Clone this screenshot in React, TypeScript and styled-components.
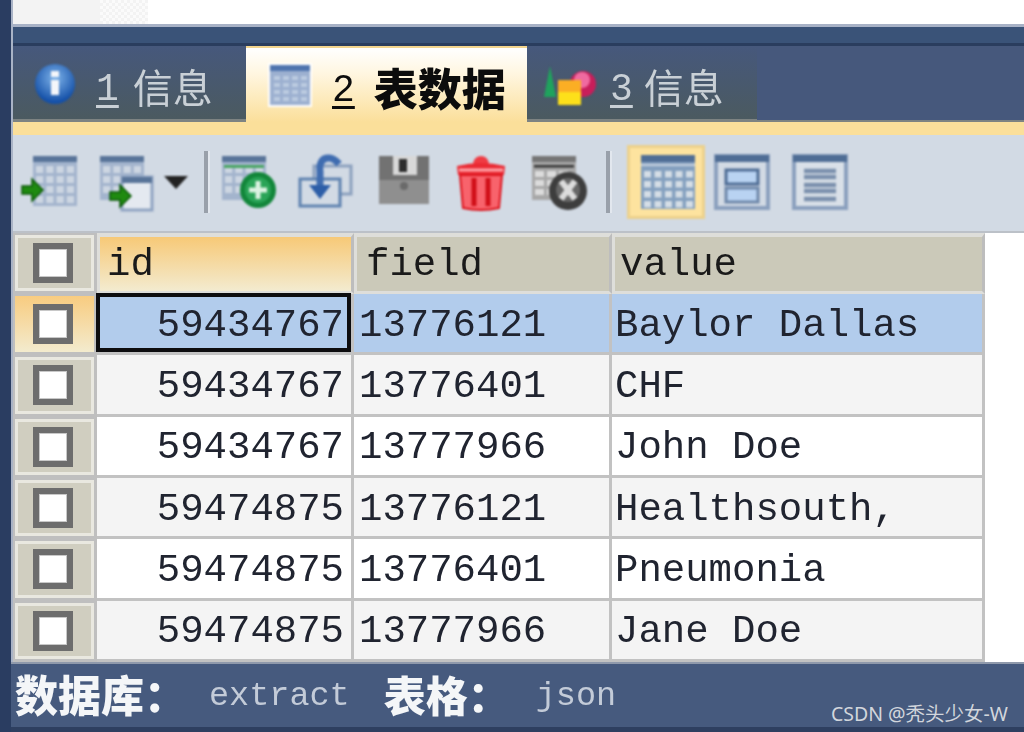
import React from "react";
import styled, { createGlobalStyle } from "styled-components";

const Global = createGlobalStyle`
  html, body { margin: 0; padding: 0; background: #fff; overflow: hidden; }
`;
const MONO = `"Liberation Mono", "Noto Sans CJK SC", monospace`;
const CJK = `"Liberation Mono", "Noto Sans CJK SC", sans-serif`;

const Page = styled.div`
  width: 1024px; height: 732px; display: flex; overflow: hidden; position: relative; background: #fff;
`;
const LeftBar = styled.div`
  width: 11px; flex: none; background: #2a3d61; border-right: 2px solid #a9b3c6;
`;
const Main = styled.div`
  flex: 1; min-width: 0; display: flex; flex-direction: column;
`;
const TopStrip = styled.div`
  height: 24px; flex: none; display: flex; background: #fff;
`;
const TopGrey = styled.div`
  width: 87px; background: #f3f3f3;
`;
const TopChecker = styled.div`
  width: 48px; background: repeating-conic-gradient(#f3f3f3 0 25%, #fbfbfb 0 50%) 0 0 / 6px 6px;
`;
const DarkBand = styled.div`
  height: 16px; flex: none; background: #3a5378; border-top: 3px solid #a8b2c6; border-bottom: 3px solid #2a3d5e;
`;
const TabStrip = styled.div`
  height: 76px; flex: none; display: flex; background: #46587c; box-shadow: inset 0 -2px 0 #7d8382;
`;
const Tab = styled.div<{ $w: number; $active?: boolean }>`
  width: ${p => p.$w}px; flex: none; display: flex; align-items: center; box-sizing: border-box;
  background: ${p => p.$active
    ? "linear-gradient(#ffffff 0%, #fff6e0 35%, #fbdf9a 100%)"
    : "linear-gradient(#46587c, #4b5a60 96%, #7d8382 96%)"};
  border-top: ${p => (p.$active ? "2px solid #f3d58e" : "0")};
  color: ${p => (p.$active ? "#0c0c0c" : "#c9d0d6")};
  font-family: ${CJK};
`;
const TabIcon = styled.svg<{ $ml: number }>`
  flex: none; margin-left: ${p => p.$ml}px; filter: blur(0.8px);
`;
const TabNum = styled.span<{ $ml: number }>`
  display: inline-block; filter: blur(0.6px);
  font: 400 38px ${MONO}; text-decoration: underline; text-underline-offset: 5px; text-decoration-thickness: 3px;
  margin-left: ${p => p.$ml}px; margin-top: 10px;
`;
const TabLabel = styled.span<{ $ml: number; $active?: boolean }>`
  display: inline-block; filter: blur(0.7px);
  font-family: ${CJK}; font-size: ${p => (p.$active ? 44 : 40)}px; font-weight: ${p => (p.$active ? 900 : 400)};
  margin-left: ${p => p.$ml}px; margin-top: 4px; white-space: nowrap;
`;
const YellowBand = styled.div`
  height: 13px; flex: none; background: #fbdf9a;
`;
const Toolbar = styled.div`
  height: 98px; flex: none; box-sizing: border-box; display: flex; align-items: center; background: #d2dae4;
  border-bottom: 2px solid #bcc1c8; padding-bottom: 2px;
`;
const ToolIcon = styled.svg<{ $ml: number }>`
  flex: none; margin-left: ${p => p.$ml}px; margin-top: -1px; filter: blur(1px);
`;
const Drop = styled.svg`
  flex: none; margin-left: 3px; filter: blur(0.8px);
`;
const Sep = styled.div<{ $ml: number }>`
  width: 4px; height: 62px; flex: none; margin-left: ${p => p.$ml}px; background: #99a0aa;
  box-shadow: 2px 0 0 #e2e7ee; filter: blur(0.6px);
`;
const ActiveBox = styled.div`
  width: 78px; height: 74px; flex: none; margin-left: 17px; display: flex; align-items: center; justify-content: center;
  box-sizing: border-box; padding-left: 3px; background: #fde39f; border: 3px solid #ecd18c; filter: blur(0.8px);
`;
const Grid = styled.div`
  width: 972px; height: 429px; flex: none; box-sizing: border-box; background: #bdbdbd;
  display: grid; grid-template-columns: 84px 257px 258px 373px; grid-template-rows: 61px repeat(6, 1fr);
  overflow: hidden;
`;
const Corner = styled.div<{ $current?: boolean }>`
  display: flex; align-items: center; justify-content: center; box-sizing: border-box; padding-right: 4px;
  border: solid #bfbfbf; border-width: 2px 3px 3px 2px;
  background: ${p => p.$current ? "linear-gradient(#f8cc80, #f3ebce)" : "#d0cec0"};
  box-shadow: inset 0 0 0 3px ${p => (p.$current ? "transparent" : "#e9e8e0")};
`;
const Check = styled.div`
  width: 40px; height: 40px; box-sizing: border-box; background: #fff; border: 6px solid #6d6d6d;
  box-shadow: inset 0 0 0 1px #c8c8c8; filter: blur(0.7px);
`;
const Head = styled.div<{ $active?: boolean; $pl: number }>`
  box-sizing: border-box; padding: 2px 0 0 ${p => p.$pl}px; display: flex; align-items: center;
  border: 3px solid #dededa; border-width: 4px 3px 3px 3px; border-right-color: #bdbdbd;
  font: 400 39px ${MONO}; color: #1a1a1a; white-space: pre;
  background: ${p => p.$active ? "linear-gradient(#f7c977, #f3ebd0)" : "#cbc9b9"};
  & > span { display: inline-block; filter: blur(0.7px); }
`;
const Cell = styled.div<{ $bg: string; $right?: boolean; $focus?: boolean; $pl?: number }>`
  box-sizing: border-box; display: flex; align-items: center; white-space: pre; position: relative;
  justify-content: ${p => (p.$right ? "flex-end" : "flex-start")};
  padding: ${p => (p.$right ? "5px 7px 0 0" : `5px 0 0 ${p.$pl ?? 5}px`)};
  font: 400 39px ${MONO}; color: #202430;
  background: ${p => p.$bg};
  border-right: 3px solid #c2c2c2; border-bottom: 3px solid #c2c2c2;
  & > span { display: inline-block; filter: blur(0.7px); }
  ${p => p.$focus ? `
    &::after {
      content: ""; position: absolute; left: -1px; right: 0; top: -1px; bottom: 0;
      box-sizing: border-box; border: 4px solid #0d0d0f; z-index: 1;
    }` : ""}
`;
const Footer = styled.div`
  flex: 1; min-height: 0; box-sizing: border-box; display: flex; align-items: center; position: relative;
  margin-left: -2px; padding: 0 0 4px 4px; background: #465a7e; border-bottom: 5px solid #2e3f60; border-top: 2px solid #8f99ab;
`;
const FooterLabel = styled.span<{ $ml?: number; $size: number }>`
  display: inline-block; font: 900 ${p => p.$size}px ${CJK}; color: #f4f6f8; margin-left: ${p => p.$ml ?? 0}px; white-space: nowrap; filter: blur(0.6px);
`;
const FooterValue = styled.span<{ $ml?: number }>`
  display: inline-block; font: 400 33.5px ${MONO}; color: #c3cbd8; margin-left: ${p => p.$ml ?? 0}px; margin-top: 4px; filter: blur(0.6px);
`;
const Watermark = styled.span`
  position: absolute; right: 16px; bottom: 0; font: 400 19.5px "Noto Sans", "Noto Sans CJK SC", sans-serif; color: #d2d6dc;
`;

const cells = (x: number, y: number, cols: number, rows: number, w: number, h: number, gap: number, fill: string) => {
  const out: React.ReactElement[] = [];
  for (let r = 0; r < rows; r++) for (let c = 0; c < cols; c++)
    out.push(<rect key={`${r}-${c}`} x={x + c * (w + gap)} y={y + r * (h + gap)} width={w} height={h} fill={fill} />);
  return out;
};
const Ic = ({ ml, w = 60, children }: { ml: number; w?: number; children: React.ReactNode }) => (
  <ToolIcon $ml={ml} width={w} height="60" viewBox={`0 0 ${w} 60`}>{children}</ToolIcon>
);
const Arrow = ({ x, y }: { x: number; y: number }) => (
  <path d={`M${x} ${y + 7}H${x + 10}V${y}L${x + 21} ${y + 11}L${x + 10} ${y + 22}V${y + 15}H${x}Z`} fill="#1f8a10" stroke="#0c5a08" strokeWidth="1.5" />
);
const Table = ({ x, y, w, h }: { x: number; y: number; w: number; h: number }) => (
  <g>
    <rect x={x} y={y} width={w} height={h} fill="#a3b4cd" />
    <rect x={x} y={y} width={w} height="6" fill="#587499" />
    {cells(x + 3, y + 10, 4, Math.floor((h - 10) / 10), (w - 15) / 4, 7, 3, "#cdd6e2")}
  </g>
);

const rows = [
  ["59434767", "13776121", "Baylor Dallas"],
  ["59434767", "13776401", "CHF"],
  ["59434767", "13777966", "John Doe"],
  ["59474875", "13776121", "Healthsouth,"],
  ["59474875", "13776401", "Pneumonia"],
  ["59474875", "13777966", "Jane Doe"],
];

export default function App() {
  return (
    <Page>
      <Global />
      <LeftBar />
      <Main>
        <TopStrip><TopGrey /><TopChecker /></TopStrip>
        <DarkBand />
        <TabStrip>
          <Tab $w={233}>
            <TabIcon $ml={20} width="44" height="44" viewBox="0 0 44 44">
              <defs><radialGradient id="i" cx="0.5" cy="0.35" r="0.6"><stop offset="0" stopColor="#7fb4ea" /><stop offset="1" stopColor="#1450a8" /></radialGradient></defs>
              <circle cx="22" cy="22" r="20" fill="url(#i)" />
              <rect x="18" y="9" width="8" height="6" fill="#f4f6fa" />
              <rect x="18" y="18" width="8" height="15" fill="#f4f6fa" />
            </TabIcon>
            <TabNum $ml={19}>1</TabNum>
            <TabLabel $ml={14}>信息</TabLabel>
          </Tab>
          <Tab $w={281} $active>
            <TabIcon $ml={21} width="46" height="46" viewBox="0 0 46 46">
              <rect x="1" y="1" width="44" height="44" fill="#fff" />
              <rect x="3" y="3" width="40" height="40" fill="#9cb0d0" />
              <rect x="3" y="3" width="40" height="6" fill="#4f74ae" />
              {cells(7, 14, 4, 4, 6, 4, 3, "#bccbe0")}
            </TabIcon>
            <TabNum $ml={19}>2</TabNum>
            <TabLabel $ml={19} $active>表数据</TabLabel>
          </Tab>
          <Tab $w={230}>
            <TabIcon $ml={15} width="56" height="44" viewBox="0 0 56 44">
              <path d="M8 4L14 35H2Z" fill="#1fa35d" />
              <circle cx="41" cy="22" r="13" fill="#c81e5a" />
              <circle cx="40" cy="18" r="8" fill="#f06aa0" />
              <rect x="16" y="18" width="23" height="25" fill="#fde01a" />
              <rect x="16" y="18" width="23" height="12" fill="#fbae24" />
            </TabIcon>
            <TabNum $ml={12}>3</TabNum>
            <TabLabel $ml={11}>信息</TabLabel>
          </Tab>
        </TabStrip>
        <YellowBand />
        <Toolbar>
          <Ic ml={8}><Table x={12} y={4} w={44} h={50} /><Arrow x={1} y={27} /></Ic>
          <Ic ml={19}><Table x={0} y={4} w={44} h={44} /><rect x="22" y="25" width="30" height="33" fill="#e4e9f0" stroke="#8fa3c1" strokeWidth="3" /><rect x="22" y="25" width="30" height="6" fill="#587499" /><Arrow x={10} y={33} /></Ic>
          <Drop width="26" height="16" viewBox="0 0 26 16"><path d="M1 2H25L13 15Z" fill="#222" /></Drop>
          <Sep $ml={15} />
          <Ic ml={12}><Table x={2} y={4} w={44} h={44} /><rect x="4" y="13" width="40" height="3" fill="#4ba664" /><circle cx="38" cy="38" r="18" fill="#12863a" /><circle cx="38" cy="38" r="13" fill="#2aa457" /><path d="M38 29V47M29 38H47" stroke="#dcf2e2" strokeWidth="5" /></Ic>
          <Ic ml={16}><rect x="18" y="14" width="37" height="28" fill="none" stroke="#8ba0be" strokeWidth="3" /><rect x="4" y="27" width="40" height="27" fill="#d2dae4" stroke="#5f82af" strokeWidth="3" /><path d="M43 12C36 3 22 3 24 20V36" fill="none" stroke="#3f6cb0" strokeWidth="7" /><path d="M13 33H35L24 47Z" fill="#2d5ea8" /></Ic>
          <Ic ml={20}><rect x="3" y="4" width="50" height="48" fill="#727272" /><rect x="3" y="28" width="50" height="24" fill="#8f8f8f" /><rect x="17" y="4" width="24" height="19" fill="#d8d8d8" /><rect x="23" y="7" width="8" height="13" fill="#2c2c2c" /><circle cx="28" cy="34" r="4" fill="#6a6a6a" /></Ic>
          <Ic ml={15}><path d="M22 13C22 1 38 1 38 13Z" fill="#ef3b43" /><path d="M7 23L6 14Q30 8 54 14L53 23Z" fill="#ea2a33" /><path d="M9 23H51L48 56Q30 60 12 56Z" fill="#f8636c" stroke="#dc141d" strokeWidth="2" /><path d="M23 26V54M37 26V54" stroke="#d00f18" strokeWidth="5" /><path d="M8 18H52" stroke="#ffa4a9" strokeWidth="3" /></Ic>
          <Ic ml={19}><rect x="2" y="4" width="44" height="44" fill="#a8a8a8" /><rect x="2" y="4" width="44" height="6" fill="#757575" /><rect x="4" y="13" width="40" height="2.5" fill="#333" />{cells(5, 19, 3, 3, 9, 6, 3, "#dcdcdc")}<circle cx="38" cy="39" r="19" fill="#3d3d3d" /><circle cx="38" cy="38" r="12" fill="#666" /><path d="M31 29L45 47M45 29L31 47" stroke="#dcdcdc" strokeWidth="6" /></Ic>
          <Sep $ml={16} />
          <ActiveBox>
            <svg width="54" height="54" viewBox="0 0 54 54" style={{ flex: "none" }}>
              <rect width="54" height="54" fill="#84a0bf" /><rect width="54" height="7" fill="#4f6d95" /><rect y="9" width="54" height="2" fill="#c7d2df" />
              {cells(3, 16, 5, 4, 7, 6.5, 3.5, "#d5dee6")}
            </svg>
          </ActiveBox>
          <Ic ml={8} w={58}><rect x="3" y="4" width="52" height="52" fill="#d2dae4" stroke="#8ba0be" strokeWidth="4" /><rect x="2" y="3" width="54" height="7" fill="#4f6d95" /><rect x="13" y="18" width="32" height="14" fill="#b9d3f2" stroke="#4f6d95" strokeWidth="3" /><rect x="13" y="36" width="32" height="14" fill="#b9d3f2" stroke="#6f88aa" strokeWidth="3" /></Ic>
          <Ic ml={20} w={58}><rect x="3" y="4" width="52" height="52" fill="#d9e0e8" stroke="#8ba0be" strokeWidth="4" /><rect x="2" y="3" width="54" height="7" fill="#4f6d95" /><path d="M13 19H45M13 25H45M13 33H45M13 39H45M13 47H45" stroke="#7b90ad" strokeWidth="4.5" /></Ic>
        </Toolbar>
        <Grid>
          <Corner><Check /></Corner>
          <Head $active $pl={7}><span>id</span></Head>
          <Head $pl={9}><span>field</span></Head>
          <Head $pl={5}><span>value</span></Head>
          {rows.map((r, i) => {
            const bg = i === 0 ? "#b2ccec" : i % 2 === 1 ? "#f4f4f4" : "#ffffff";
            return (
              <React.Fragment key={i}>
                <Corner $current={i === 0}><Check /></Corner>
                <Cell $bg={bg} $right $focus={i === 0}><span>{r[0]}</span></Cell>
                <Cell $bg={bg}><span>{r[1]}</span></Cell>
                <Cell $bg={bg} $pl={3}><span>{r[2]}</span></Cell>
              </React.Fragment>
            );
          })}
        </Grid>
        <Footer>
          <FooterLabel $size={43}>数据库：</FooterLabel>
          <FooterValue $ml={22}>extract</FooterValue>
          <FooterLabel $size={42} $ml={34}>表格：</FooterLabel>
          <FooterValue $ml={26}>json</FooterValue>
          <Watermark>CSDN @秃头少女-W</Watermark>
        </Footer>
      </Main>
    </Page>
  );
}
